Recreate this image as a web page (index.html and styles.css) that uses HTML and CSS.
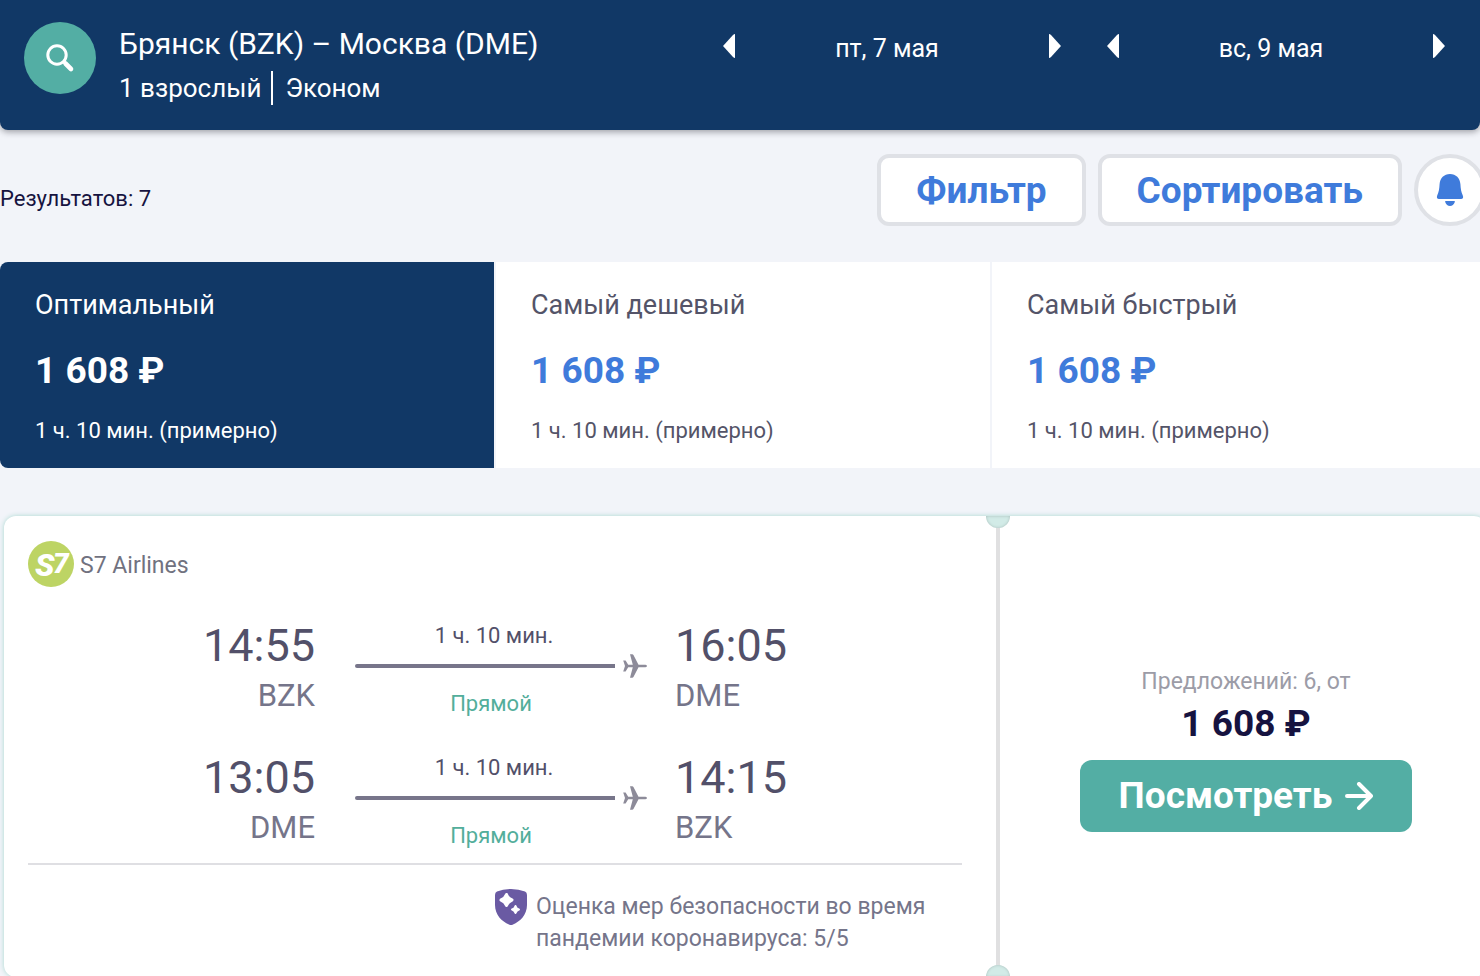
FILE: index.html
```html
<!DOCTYPE html>
<html lang="ru">
<head>
<meta charset="utf-8">
<meta name="viewport" content="width=device-width, initial-scale=1">
<title>Брянск – Москва</title>
<link rel="stylesheet" href="styles.css">
</head>
<body>
<div class="page">
  <header class="search-bar">
    <button class="search-button" type="button" aria-label="Изменить поиск">
      <svg width="30" height="30" viewBox="0 0 30 30" fill="none" stroke="currentColor"><circle cx="12" cy="12" r="9.2" stroke-width="3"/><path d="M18 18l2 2" stroke-width="3"/><path d="M20.500 20.500l5.500 5.500" stroke-width="4.600" stroke-linecap="round"/></svg>
    </button>
    <div class="trip">
      <h1 class="route">Брянск (BZK) – Москва (DME)</h1>
      <p class="trip-details"><span>1 взрослый</span><span class="cabin">Эконом</span></p>
    </div>
    <div class="dates">
      <div class="date-picker">
        <button class="date-step" type="button" aria-label="Предыдущий день"><svg width="14" height="26" viewBox="0 0 14 26"><path d="M13 1v24Q12 25 11 24L1 13 11 2Q12 1 13 1z" fill="currentColor"/></svg></button>
        <span class="date">пт, 7 мая</span>
        <button class="date-step" type="button" aria-label="Следующий день"><svg width="14" height="26" viewBox="0 0 14 26"><path d="M1 1v24Q2 25 3 24L13 13 3 2Q2 1 1 1z" fill="currentColor"/></svg></button>
      </div>
      <div class="date-picker">
        <button class="date-step" type="button" aria-label="Предыдущий день"><svg width="14" height="26" viewBox="0 0 14 26"><path d="M13 1v24Q12 25 11 24L1 13 11 2Q12 1 13 1z" fill="currentColor"/></svg></button>
        <span class="date">вс, 9 мая</span>
        <button class="date-step" type="button" aria-label="Следующий день"><svg width="14" height="26" viewBox="0 0 14 26"><path d="M1 1v24Q2 25 3 24L13 13 3 2Q2 1 1 1z" fill="currentColor"/></svg></button>
      </div>
    </div>
  </header>

  <main class="results">
    <div class="toolbar">
      <p class="count">Результатов: 7</p>
      <button class="tool" type="button">Фильтр</button>
      <button class="tool" type="button">Сортировать</button>
      <button class="alert" type="button" aria-label="Уведомления о цене">
        <svg width="28" height="34" viewBox="0 0 28 34" fill="currentColor"><path d="M14 1C8 1 4 5.200 3.600 11c-.3 5-.7 7.500-2.400 11.500C.4 24.600 1 26 3 26h22c2 0 2.600-1.400 1.800-3.500C25.100 18.500 24.700 16 24.400 11 24 5.200 20 1 14 1z"/><path d="M9.800 28h8.400c.6 0 .8.500.5 1.200C18 31.500 16.200 33 14 33s-4-1.500-4.700-3.800C9 28.500 9.200 28 9.800 28z"/></svg>
      </button>
    </div>

    <div class="tabs" role="tablist">
      <button class="tab tab-active" type="button" role="tab" aria-selected="true"><span class="tab-name">Оптимальный</span><span class="price">1 608 ₽</span><span class="tab-time">1 ч. 10 мин. (примерно)</span></button>
      <button class="tab" type="button" role="tab" aria-selected="false"><span class="tab-name">Самый дешевый</span><span class="price">1 608 ₽</span><span class="tab-time">1 ч. 10 мин. (примерно)</span></button>
      <button class="tab" type="button" role="tab" aria-selected="false"><span class="tab-name">Самый быстрый</span><span class="price">1 608 ₽</span><span class="tab-time">1 ч. 10 мин. (примерно)</span></button>
    </div>

    <article class="ticket">
      <section class="flights">
        <div class="airline">
          <svg width="46" height="46" viewBox="0 0 46 46" role="img" aria-label="S7"><circle cx="23" cy="23" r="23" fill="#bdd464"/><text class="logo-text" x="7" y="35">S<tspan class="logo-digit" x="25" y="32">7</tspan></text></svg>
          <span class="airline-name">S7 Airlines</span>
        </div>
        <div class="legs">
          <div class="leg">
            <div class="stop stop-from"><span class="time">14:55</span><span class="code">BZK</span></div>
            <div class="path">
              <span class="duration">1 ч. 10 мин.</span>
              <span class="track"><span class="line"></span><svg class="plane" width="24" height="24" viewBox="0 0 24 24"><path d="M22.500 10.800H15.500L10.600 1.200Q10.100.2 9.200.2H7L9.800 10.800H5.200L2.600 6.600H.2L2 12 .2 17.400H2.600L5.200 13.200H9.800L7 23.800H9.200Q10.100 23.800 10.600 22.800L15.500 13.200H22.500Q24 13 24 12T22.500 10.800z" fill="currentColor"/></svg></span>
              <span class="direct">Прямой</span>
            </div>
            <div class="stop"><span class="time">16:05</span><span class="code">DME</span></div>
          </div>
          <div class="leg">
            <div class="stop stop-from"><span class="time">13:05</span><span class="code">DME</span></div>
            <div class="path">
              <span class="duration">1 ч. 10 мин.</span>
              <span class="track"><span class="line"></span><svg class="plane" width="24" height="24" viewBox="0 0 24 24"><path d="M22.500 10.800H15.500L10.600 1.200Q10.100.2 9.200.2H7L9.800 10.800H5.200L2.600 6.600H.2L2 12 .2 17.400H2.600L5.200 13.200H9.800L7 23.800H9.200Q10.100 23.800 10.600 22.800L15.500 13.200H22.500Q24 13 24 12T22.500 10.800z" fill="currentColor"/></svg></span>
              <span class="direct">Прямой</span>
            </div>
            <div class="stop"><span class="time">14:15</span><span class="code">BZK</span></div>
          </div>
        </div>
        <div class="safety">
          <div class="safety-note">
            <svg width="32" height="38" viewBox="0 0 32 38"><path d="M16 0Q24 0 30 2.500 32 3.300 32 6V16C32 26 25 32.500 18 35.500Q16 36.500 14 35.500C7 32.500 0 26 0 16V6Q0 3.300 2 2.500 8 0 16 0z" fill="#6a5aa3"/><path d="M11.500 5.500Q13 9.500 17 11 13 12.500 11.500 16.500 10 12.500 6 11 10 9.500 11.500 5.500z" fill="#fff" stroke="#fff" stroke-width="3" stroke-linejoin="round"/><path d="M20.500 17Q21.500 20 24 20.500 21.500 21 20.500 24 19.500 21 17 20.500 19.500 20 20.500 17z" fill="#fff" stroke="#fff" stroke-width="2" stroke-linejoin="round"/></svg>
            <p class="safety-text">Оценка мер безопасности во время пандемии коронавируса: 5/5</p>
          </div>
        </div>
      </section>
      <div class="divider"></div>
      <section class="offer">
        <span class="offer-count">Предложений: 6, от</span>
        <span class="price">1 608 ₽</span>
        <button class="view" type="button">Посмотреть
          <svg width="28" height="28" viewBox="0 0 28 28" fill="none" stroke="currentColor" stroke-width="4" stroke-linecap="round" stroke-linejoin="round"><path d="M2 14h24M14 2l12 12-12 12"/></svg>
        </button>
      </section>
    </article>
  </main>
</div>
</body>
</html>
```
FILE: styles.css
```css
* { box-sizing: border-box; }

body {
  margin: 0;
  background: #f2f4f9;
  color: #161340;
  font-family: Roboto, "Liberation Sans", sans-serif;
  font-size: 23px;
  line-height: 32px;
}

h1, p { margin: 0; }

button {
  padding: 0;
  border: 0;
  background: none;
  color: inherit;
  font: inherit;
  cursor: pointer;
}

svg { display: block; flex: none; }

.page { overflow: hidden; }

.search-bar {
  display: flex;
  align-items: flex-start;
  min-height: 130px;
  padding: 22px 34px 22px 24px;
  border-radius: 0 0 8px 8px;
  background: #113866;
  box-shadow: 0 2px 6px rgba(30, 30, 40, 0.4);
  color: #fff;
}

.search-button {
  display: grid;
  flex: none;
  place-items: center;
  width: 72px;
  height: 72px;
  margin-right: 23px;
  border-radius: 50%;
  background: #53aea4;
}

.trip { flex: 1; }

.route {
  font-size: 30px;
  font-weight: 400;
  line-height: 44px;
}

.trip-details {
  display: flex;
  align-items: center;
  padding-top: 5px;
  font-size: 26px;
  line-height: 34px;
}

.cabin {
  margin-left: 10px;
  padding-left: 12px;
  border-left: 2px solid #fff;
}

.dates {
  display: flex;
  gap: 44px;
}

.date-picker {
  display: flex;
  align-items: center;
  width: 340px;
  height: 48px;
}

.date {
  flex: 1;
  padding: 5px 10px 0 0;
  font-size: 25px;
  text-align: center;
}

.results { margin-right: -6px; }

.toolbar {
  display: flex;
  align-items: center;
  gap: 12px;
  padding: 24px 0 36px;
}

.count {
  flex: 1;
  padding-top: 17px;
  font-size: 22px;
}

.tool,
.alert {
  height: 72px;
  border: 4px solid #dfe1e6;
  background: #fff;
  color: #3f7bdb;
}

.tool {
  padding: 2px 35px 0;
  border-radius: 12px;
  font-size: 37px;
  font-weight: 700;
}

.alert {
  display: grid;
  place-items: center;
  width: 72px;
  border-radius: 50%;
}

.tabs {
  display: grid;
  grid-template-columns: repeat(3, 1fr);
  gap: 2px;
}

.tab {
  display: flex;
  flex-direction: column;
  align-items: flex-start;
  padding: 27px 35px 21px;
  background: #fff;
  color: #545468;
}

.tab-active {
  border-radius: 8px 0 0 8px;
  background: #113866;
  color: #fff;
}

.tab-name { font-size: 27px; }

.tab-time { font-size: 22px; }

.price {
  font-size: 37px;
  font-weight: 700;
  line-height: 48px;
}

.tab .price {
  margin: 26px 0 20px;
  color: #3f7bdb;
}

.tab-active .price { color: #fff; }

.ticket {
  display: grid;
  grid-template-columns: minmax(0, 1fr) 4px 486px;
  margin: 48px 0 0 4px;
  border-radius: 12px;
  background: #fff;
  box-shadow: 0 0 5px #a9d8d0;
}

.flights { padding: 25px 34px 22px 24px; }

.airline {
  display: flex;
  align-items: center;
  gap: 6px;
  color: #71727f;
}

.airline-name { padding-top: 4px; }

.logo-text {
  fill: #fff;
  font: italic 900 32px Roboto, sans-serif;
}

.logo-digit { font-size: 28px; }

.legs {
  display: grid;
  gap: 30px;
  padding: 31px 0 11px;
}

.leg {
  display: grid;
  grid-template-columns: 1fr 360px 1fr;
}

.stop {
  display: flex;
  flex-direction: column;
  color: #75758a;
}

.stop-from { align-items: flex-end; }

.time {
  color: #525069;
  font-size: 45px;
  line-height: 56px;
}

.code {
  font-size: 31px;
  line-height: 44px;
}

.path {
  display: flex;
  flex-direction: column;
  padding: 2px 28px 0 40px;
}

.duration,
.direct {
  width: 278px;
  font-size: 22px;
  text-align: center;
}

.duration { color: #525069; }

.direct {
  padding: 10px 6px 0 0;
  color: #53ae9b;
}

.track {
  display: flex;
  align-items: center;
  gap: 8px;
  padding-top: 2px;
}

.line {
  flex: 1;
  height: 4px;
  border-radius: 2px 0 0 2px;
  background: #77758a;
}

.plane { color: #8d8b99; }

.safety {
  padding-top: 24px;
  border-top: 2px solid #dfdfe3;
}

.safety-note {
  display: flex;
  align-items: flex-start;
  gap: 9px;
  width: 50%;
  margin-left: auto;
  color: #75758a;
}

.safety-text { padding-top: 2px; }

.divider {
  position: relative;
  background: #e0e0e1;
}

.divider::before,
.divider::after {
  position: absolute;
  left: -10px;
  width: 24px;
  height: 12px;
  background: #d2ebe7;
  box-shadow: inset 0 0 3px #a9bebb;
  content: "";
}

.divider::before {
  top: 0;
  border-radius: 0 0 12px 12px;
}

.divider::after {
  bottom: 0;
  border-radius: 12px 12px 0 0;
}

.offer {
  display: flex;
  flex-direction: column;
  align-items: center;
  justify-content: center;
  padding: 4px 74px 0 80px;
}

.offer-count { color: #9c9ca7; }

.offer .price { margin: 2px 0 12px; }

.view {
  display: flex;
  align-items: center;
  justify-content: center;
  gap: 13px;
  width: 100%;
  height: 72px;
  border-radius: 12px;
  background: #53aea4;
  color: #fff;
  font-size: 37px;
  font-weight: 700;
}
```
